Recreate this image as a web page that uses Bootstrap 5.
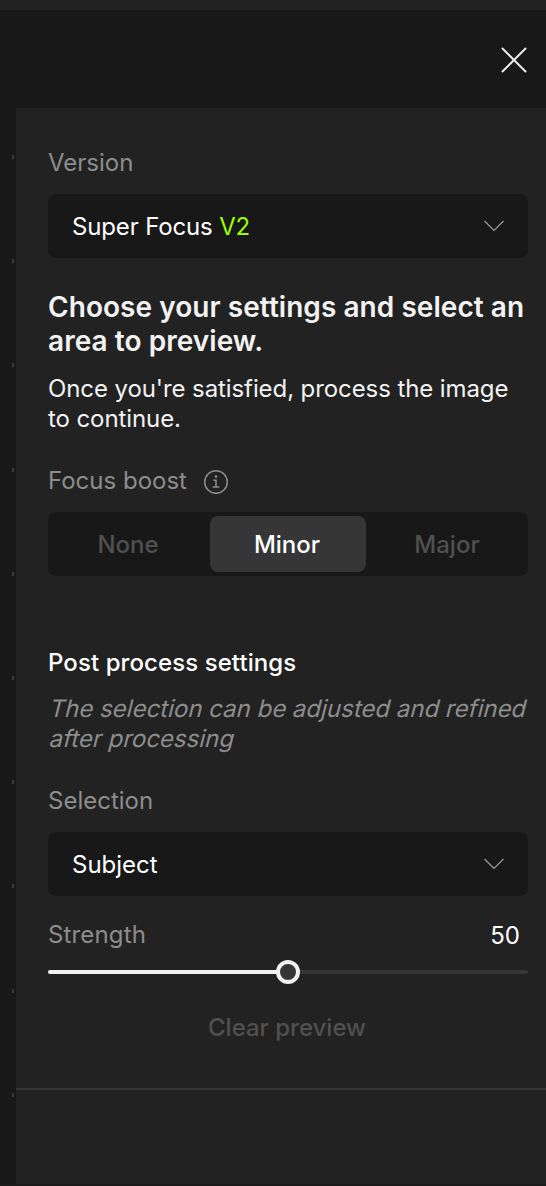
<!DOCTYPE html>
<html lang="en" data-bs-theme="dark">
<head>
<meta charset="utf-8">
<meta name="viewport" content="width=device-width, initial-scale=1">
<title>Super Focus settings</title>
<link href="https://cdn.jsdelivr.net/npm/bootstrap@5.3.0/dist/css/bootstrap.min.css" rel="stylesheet">
<style>
body{background:#181818;color:#f2f2f2;font-family:Inter,"Liberation Sans",sans-serif;font-size:24px;line-height:30px;font-weight:400;overflow:hidden}
.app{height:1186px;border-top:10px solid #222;border-bottom:2px solid #1b1b1b}
.topbar{height:98px;padding:2px 19px 0 0}
.rail{width:16px;padding:47px 2px 0 0}
.tick{width:2px;height:4px;margin-bottom:100.2px;background:#393939}
.panel{background:#222;min-width:0}
.controls{height:982px;padding:40px 18px 0 32px;border-bottom:2px solid #363636}
.label-text{color:#8d8d8d}
.field-label{margin:32px 0 16px}
.field-label.first{margin-top:0}
.strength{margin:24px 0 20px}
.strength .label-text{letter-spacing:.15px}
.select-box{height:64px;padding:2px 24px 0;background:#181818;border:0;border-radius:8px;color:#fff;font-size:24px;font-weight:400;text-align:left}
.select-box svg{margin-top:-2px}
.version-name{letter-spacing:-.15px}
.lime{color:#9cff00}
.headline{color:#f2f2f2;font-size:28px;line-height:34px;font-weight:600;letter-spacing:.05px;margin:32px 0 16px}
.intro{letter-spacing:-.09px}
.slanted{display:block;transform:skewX(-14deg);transform-origin:0 24px}
.segments{height:64px;padding:4px 2px;gap:4px;background:#181818;border-radius:8px}
.segments .btn{flex:1 1 0;border:0;border-radius:8px;font-size:24px;font-weight:500;color:#505050;padding:2px 2px 0 0}
.segments .btn:first-child{text-indent:2px}
.segments .btn.active{background:#363636;color:#fff}
.post-title{font-size:24px;line-height:30px;font-weight:500;letter-spacing:.08px;margin:72px 0 16px}
.track{height:4px;background:#363636;border-radius:2px;overflow:visible}
.track .progress-bar{background:#f2f2f2;border-radius:2px}
.thumb{width:24px;height:24px;border:4px solid #f2f2f2;background:#363636}
.btn.clear{color:#505050;font-weight:500;font-size:24px;line-height:30px;margin-top:39px;padding:0 2px 0 0}
</style>
</head>
<body>
<div class="app d-flex flex-column">
  <header class="topbar d-flex align-items-center justify-content-end">
    <button class="btn border-0 p-0 d-flex" aria-label="Close"><svg width="26" height="26" viewBox="0 0 26 26" fill="none" stroke="#e8e8e8" stroke-width="2" stroke-linecap="round"><path d="M1.5 1.5l23 23M24.5 1.5l-23 23"/></svg></button>
  </header>
  <div class="d-flex flex-grow-1">
    <aside class="rail d-flex flex-column align-items-end flex-shrink-0">
      <i class="tick"></i><i class="tick"></i><i class="tick"></i><i class="tick"></i><i class="tick"></i><i class="tick"></i><i class="tick"></i><i class="tick"></i><i class="tick"></i><i class="tick mb-0"></i>
    </aside>
    <main class="panel flex-grow-1">
      <div class="controls">
        <div class="label-text field-label first">Version</div>
        <button class="select-box w-100 d-flex align-items-center justify-content-between">
          <span class="version-name">Super Focus <span class="lime">V2</span></span>
          <svg width="20" height="12" viewBox="0 0 20 12" fill="none" stroke="#9a9a9a" stroke-width="1.2"><path d="M.5 1L10 10.5 19.5 1"/></svg>
        </button>
        <h1 class="headline text-nowrap">Choose your settings and select an<br>area to preview.</h1>
        <p class="intro text-nowrap mb-0">Once you're satisfied, process the image<br>to continue.</p>
        <div class="label-text field-label d-flex align-items-center">
          <span>Focus boost</span>
          <svg class="ms-3" width="26" height="26" viewBox="0 0 26 26" fill="none" stroke="#8d8d8d" stroke-width="1.5"><circle cx="13" cy="14" r="11.3"/><path d="M10.5 12.3H13v6.6M9.7 19h6.6"/><circle cx="13" cy="8.5" r="1.3" fill="#8d8d8d" stroke="none"/></svg>
        </div>
        <div class="segments d-flex">
          <button class="btn">None</button>
          <button class="btn active">Minor</button>
          <button class="btn">Major</button>
        </div>
        <h2 class="post-title text-white">Post process settings</h2>
        <p class="label-text text-nowrap mb-0"><span class="slanted">The selection can be adjusted and refined</span><span class="slanted">after processing</span></p>
        <div class="label-text field-label">Selection</div>
        <button class="select-box w-100 d-flex align-items-center justify-content-between">
          <span>Subject</span>
          <svg width="20" height="12" viewBox="0 0 20 12" fill="none" stroke="#9a9a9a" stroke-width="1.2"><path d="M.5 1L10 10.5 19.5 1"/></svg>
        </button>
        <div class="strength d-flex justify-content-between pe-2"><span class="label-text">Strength</span><span class="text-white pt-1 mb-n1">50</span></div>
        <div class="position-relative">
          <div class="progress track"><div class="progress-bar" style="width:50%"></div></div>
          <span class="thumb rounded-circle position-absolute top-50 start-50 translate-middle"></span>
        </div>
        <button class="btn clear border-0 d-block mx-auto">Clear preview</button>
      </div>
    </main>
  </div>
</div>
<style>.strength .pt-1{padding-top:1px!important;margin-bottom:-1px}</style>
<script src="https://cdn.jsdelivr.net/npm/bootstrap@5.3.0/dist/js/bootstrap.bundle.min.js"></script>
</body>
</html>
